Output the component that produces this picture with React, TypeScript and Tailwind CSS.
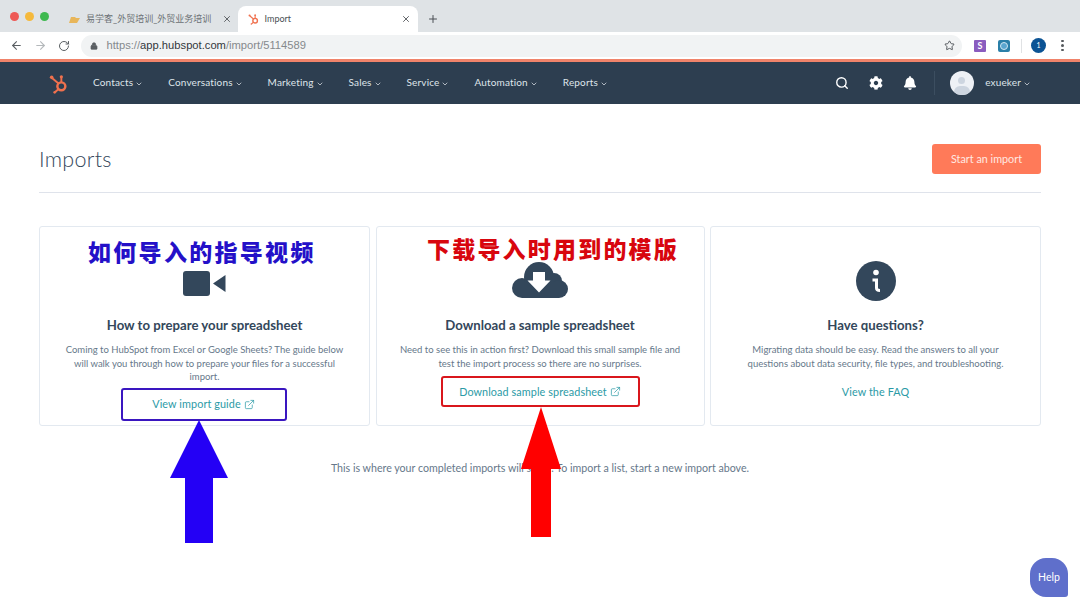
import React from 'react';
import { ArrowLeft, ArrowRight, RotateCw, Lock, Star, X, Plus, Search, ChevronDown, ExternalLink } from 'lucide-react';
import { FaBell, FaCog } from 'react-icons/fa';

const NAV_ITEMS = ['Contacts', 'Conversations', 'Marketing', 'Sales', 'Service', 'Automation', 'Reports'];

const Sprocket = ({ className }: { className?: string }) => (
  <svg viewBox="0 0 20 22" className={className} fill="none" stroke="#f0714e">
    <circle cx="13" cy="14" r="4.2" strokeWidth="2.6" />
    <path d="M10 11 L3.5 5.5" strokeWidth="2" />
    <path d="M13 10 V5" strokeWidth="2" />
    <path d="M9.8 17 L6.5 20" strokeWidth="2" />
    <circle cx="2.8" cy="4.5" r="1.9" fill="#f0714e" stroke="none" />
    <circle cx="13" cy="4" r="1.7" fill="#f0714e" stroke="none" />
    <circle cx="6" cy="20.3" r="1.4" fill="#f0714e" stroke="none" />
  </svg>
);

const Card = ({ icon, title, lines, action }: { icon: React.ReactNode; title: string; lines: string[]; action: React.ReactNode }) => (
  <div className="flex h-[200px] flex-col items-center rounded-[3px] border border-[#e3e9f0] bg-white">
    <div className="flex h-[84px] w-full items-end justify-center">{icon}</div>
    <h2 className="mt-[5px] text-[13.2px] leading-[18px] font-bold text-[#33475b]">{title}</h2>
    <div className="mt-[9px] text-center text-[9.5px] leading-[13.6px] text-[#66788a]">
      {lines.map(line => <div key={line}>{line}</div>)}
    </div>
    {action}
  </div>
);

const LinkText = ({ label, external }: { label: string; external?: boolean }) => (
  <span className="flex items-center gap-[3px] text-[10.8px] tracking-[0.1px] text-[#2b9aa6]">
    {label}
    {external && <ExternalLink className="h-[11px] w-[11px]" strokeWidth={1.6} />}
  </span>
);

export default function App() {
  return (
    <div className="relative h-[609px] w-[1080px] overflow-hidden bg-white font-['Lato','Noto_Sans_CJK_SC',sans-serif]">
      {/* Browser tabs */}
      <div className="flex h-[32px] items-end bg-[#dfe3e6]">
        <div className="flex h-[32px] items-center gap-[6px] pl-[10px] pr-[16px]">
          <span className="h-[9px] w-[9px] rounded-full bg-[#ee5a56]" />
          <span className="h-[9px] w-[9px] rounded-full bg-[#f5b93c]" />
          <span className="h-[9px] w-[9px] rounded-full bg-[#3fb950]" />
        </div>
        <div className="flex h-[26px] w-[172.6px] items-center pl-[2.5px] pr-[6px] text-[#6b7074]">
          <svg viewBox="0 0 13 9" className="mr-[5.5px] h-[9px] w-[13px] shrink-0" fill="#e8b65a">
            <path d="M1 8 L3 2 H7 L8 3 H12 L9 8 Z" />
          </svg>
          <span className="flex-1 overflow-hidden text-[9px] whitespace-nowrap">易学客_外贸培训_外贸业务培训</span>
          <X className="ml-[8px] h-[10px] w-[10px] shrink-0 text-[#55595d]" strokeWidth={2.2} />
        </div>
        <div className="flex h-[26px] w-[180px] items-center rounded-t-lg bg-white pl-[9px] pr-[7px] text-[#4a4f54]">
          <Sprocket className="mr-[5px] h-[12px] w-[13px] shrink-0" />
          <span className="flex-1 text-[9px]">Import</span>
          <X className="h-[10px] w-[10px] shrink-0 text-[#55595d]" strokeWidth={2.2} />
        </div>
        <Plus className="mb-[7px] ml-[9px] h-[12px] w-[12px] text-[#4a4f54]" strokeWidth={2} />
      </div>

      {/* Address bar */}
      <div className="flex h-[27px] items-center bg-white pl-[10px]">
        <ArrowLeft className="h-[13px] w-[13px] text-[#5a5f63]" strokeWidth={2} />
        <ArrowRight className="ml-[11px] h-[13px] w-[13px] text-[#b4b8bb]" strokeWidth={2} />
        <RotateCw className="ml-[11px] h-[12px] w-[12px] text-[#5a5f63]" strokeWidth={2} />
        <div className="ml-[11px] flex h-[22px] w-[881px] items-center rounded-full bg-[#f1f3f4] pl-[9px] pr-[7px]">
          <Lock className="h-[8px] w-[8px] fill-[#5a5f63] text-[#5a5f63]" />
          <span className="ml-[8.5px] flex-1 font-['Liberation_Sans',sans-serif] text-[11.2px] text-[#85898c]">
            https://<span className="text-[#33383c]">app.hubspot.com</span>/import/5114589
          </span>
          <Star className="h-[11px] w-[11px] text-[#4a4f54]" strokeWidth={2} />
        </div>
        <span className="ml-[12px] flex h-[12px] w-[12px] items-center justify-center rounded-[1px] bg-[#8a5cbf] text-[9px] font-bold text-white">S</span>
        <span className="ml-[12px] flex h-[12px] w-[12px] items-center justify-center rounded-[2px] bg-[#2a7fa8]">
          <span className="h-[8px] w-[8px] rounded-full border border-[#cfe6f2] bg-[#5aa6cf]" />
        </span>
        <span className="ml-[11px] h-[14px] w-px bg-[#e0e2e4]" />
        <span className="ml-[9px] flex h-[15px] w-[15px] items-center justify-center rounded-full bg-[#0b5394] text-[7px] text-white">1</span>
        <span className="ml-[15px] flex flex-col gap-[2px]">
          <span className="h-[2.5px] w-[2.5px] rounded-full bg-[#55595d]" />
          <span className="h-[2.5px] w-[2.5px] rounded-full bg-[#55595d]" />
          <span className="h-[2.5px] w-[2.5px] rounded-full bg-[#55595d]" />
        </span>
      </div>

      {/* HubSpot nav */}
      <div className="h-[3px] bg-[#f0836a]" />
      <nav className="flex h-[42px] items-center bg-[#2d3e50] pl-[49px] pr-[49px] text-[#dfe5ea]">
        <Sprocket className="h-[21px] w-[19px]" />
        <div className="ml-[25px] flex items-center gap-[25px] pb-[1px]">
          {NAV_ITEMS.map(item => (
            <span key={item} className="flex items-center gap-[2px] text-[10px] tracking-[0.15px]">
              {item}
              <ChevronDown className="mt-[2px] h-[8px] w-[8px]" strokeWidth={2.2} />
            </span>
          ))}
        </div>
        <Search className="ml-auto h-[14px] w-[14px] text-white" strokeWidth={2.4} />
        <FaCog className="ml-[20px] h-[14px] w-[14px] text-white" />
        <FaBell className="ml-[20px] h-[14px] w-[14px] text-white" />
        <span className="ml-[17px] h-[24px] w-px bg-[#3c4e60]" />
        <span className="relative ml-[15px] h-[24px] w-[24px] overflow-hidden rounded-full bg-[#eef1f6]">
          <span className="absolute left-[8px] top-[6px] h-[7px] w-[7px] rounded-full bg-[#cdd5e0]" />
          <span className="absolute left-[4px] top-[15px] h-[12px] w-[16px] rounded-full bg-[#cdd5e0]" />
        </span>
        <span className="ml-[11px] flex items-center gap-[2px] pb-[1px] text-[10px] tracking-[0.15px]">
          exueker
          <ChevronDown className="mt-[2px] h-[8px] w-[8px]" strokeWidth={2.2} />
        </span>
      </nav>

      {/* Page */}
      <main className="px-[39px]">
        <div className="flex h-[89px] items-center justify-between border-b border-[#dfe3eb] pt-[22px]">
          <h1 className="text-[21.5px] font-light tracking-[0.3px] text-[#33475b]">Imports</h1>
          <button className="h-[30px] w-[109px] rounded-[3px] bg-[#ff7a59] text-[10.8px] text-[#ffe9e2]">Start an import</button>
        </div>

        <div className="mt-[33px] grid grid-cols-[331px_329px_331px] gap-[5.5px]">
          <Card
            icon={
              <svg viewBox="0 0 43 25" className="mb-[15px] h-[25px] w-[43px]" fill="#33475b">
                <rect x="0" y="0" width="27" height="25" rx="3" />
                <path d="M30 12.5 L42.5 4 V21 Z" />
              </svg>
            }
            title="How to prepare your spreadsheet"
            lines={['Coming to HubSpot from Excel or Google Sheets? The guide below', 'will walk you through how to prepare your files for a successful', 'import.']}
            action={
              <div className="mt-[4px] mr-[2px] flex h-[33px] w-[166px] items-center justify-center rounded-[3px] border-2 border-[#3a16c0]">
                <LinkText label="View import guide" external />
              </div>
            }
          />
          <Card
            icon={
              <svg viewBox="0 0 56 37" className="mb-[12px] h-[37px] w-[56px]" fill="#33475b">
                <circle cx="10" cy="26" r="10" />
                <circle cx="27" cy="15" r="15" />
                <circle cx="42" cy="19" r="8" />
                <circle cx="47" cy="27" r="9" />
                <rect x="10" y="20" width="37" height="16" />
                <path d="M21 10 H33 V18.5 H38.5 L27 30.5 L15.5 18.5 H21 Z" fill="#fff" />
              </svg>
            }
            title="Download a sample spreadsheet"
            lines={['Need to see this in action first? Download this small sample file and', 'test the import process so there are no surprises.']}
            action={
              <div className="mt-[6px] flex h-[31px] w-[199px] items-center justify-center rounded-[3px] border-2 border-[#d9161c]">
                <LinkText label="Download sample spreadsheet" external />
              </div>
            }
          />
          <Card
            icon={
              <svg viewBox="0 0 40 40" className="mb-[10px] h-[40px] w-[40px]">
                <circle cx="20" cy="20" r="20" fill="#33475b" />
                <circle cx="20" cy="11.5" r="2.8" fill="#fff" />
                <path d="M16.5 19 H20.5 V27 Q20.5 29.5 24 29.5" fill="none" stroke="#fff" strokeWidth="3" />
              </svg>
            }
            title="Have questions?"
            lines={['Migrating data should be easy. Read the answers to all your', 'questions about data security, file types, and troubleshooting.']}
            action={
              <div className="mt-[6px] flex h-[31px] items-center justify-center">
                <LinkText label="View the FAQ" />
              </div>
            }
          />
        </div>

        <p className="mt-[35px] text-center text-[10.65px] leading-[14px] text-[#66788a]">
          This is where your completed imports will show. To import a list, start a new import above.
        </p>
      </main>

      {/* Screenshot annotations, painted over the page */}
      <div className="absolute left-[88px] top-[236px] font-['Noto_Sans_CJK_SC',sans-serif] text-[23px] leading-[30px] font-black tracking-[2.3px] text-[#2410c8]">如何导入的指导视频</div>
      <div className="absolute left-[427px] top-[233px] font-['Noto_Sans_CJK_SC',sans-serif] text-[23px] leading-[30px] font-black tracking-[2.2px] text-[#d8060e]">下载导入时用到的模版</div>
      <svg viewBox="0 0 58 124" className="absolute left-[170px] top-[420px] h-[124px] w-[58px]" fill="#2400f5">
        <path d="M29 0 L58 58 H43 V123 H15 V58 H0 Z" />
      </svg>
      <svg viewBox="0 0 40 131" className="absolute left-[521px] top-[407px] h-[131px] w-[40px]" fill="#ff0000">
        <path d="M20 0 L40 62 H30 V130 H10 V62 H0 Z" />
      </svg>

      {/* Help bubble */}
      <div className="absolute left-[1030px] top-[558px] flex h-[39px] w-[38px] items-center justify-center rounded-tl-[16px] rounded-tr-[16px] rounded-bl-[16px] rounded-br-[3px] bg-[#5f6fcb] text-[10.5px] text-white">Help</div>
    </div>
  );
}
